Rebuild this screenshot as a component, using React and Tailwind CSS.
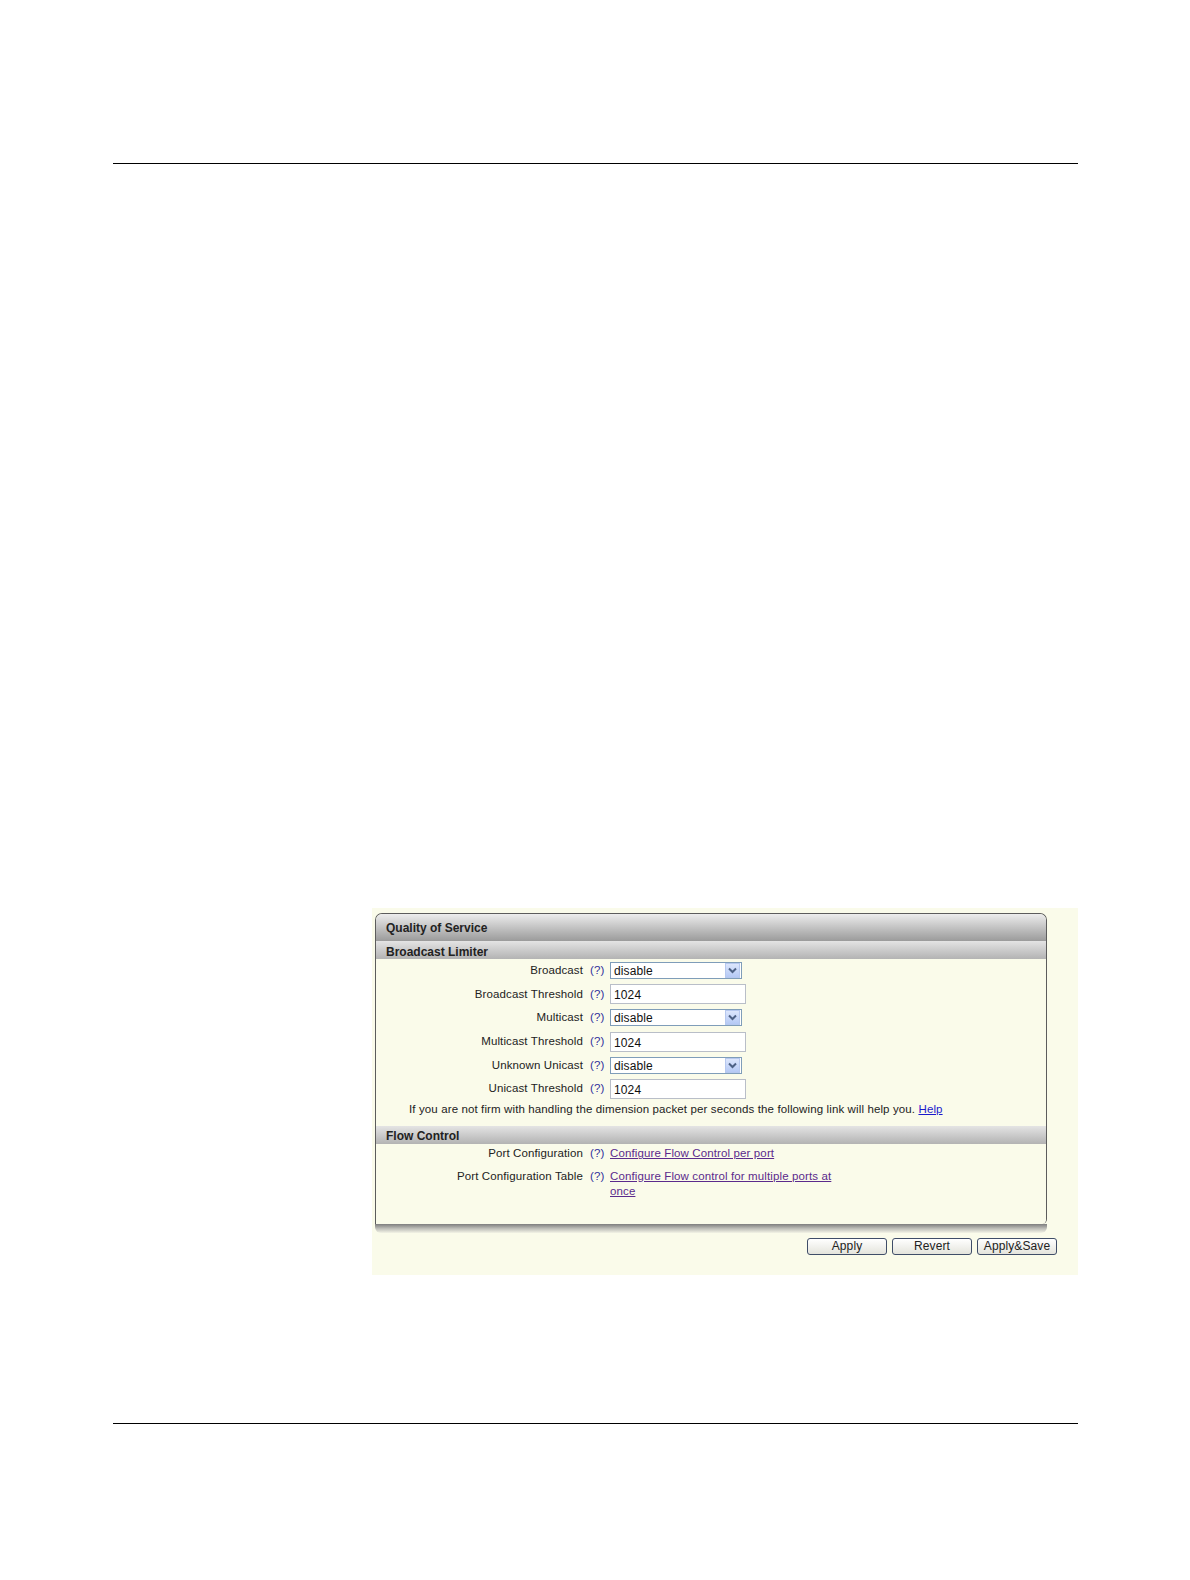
import React from 'react';

const font = { fontFamily: '"Liberation Sans", Arial, sans-serif' };

const rows = [
    { label: 'Broadcast', type: 'select', value: 'disable' },
    { label: 'Broadcast Threshold', type: 'input', value: '1024' },
    { label: 'Multicast', type: 'select', value: 'disable' },
    { label: 'Multicast Threshold', type: 'input', value: '1024' },
    { label: 'Unknown Unicast', type: 'select', value: 'disable' },
    { label: 'Unicast Threshold', type: 'input', value: '1024' },
];

const Select = ({ value }) => (
    <div className="flex items-center w-[132px] h-[17px] border border-[#7f9db9] bg-white">
        <span className="flex-1 pl-[3px] pt-px text-[12px] leading-none text-[#111]">{value}</span>
        <div className="w-[15px] h-[15px] mr-px flex items-center justify-center border border-[#b6c8ef] bg-gradient-to-b from-[#dce6fc] to-[#b5c9f5]">
            <svg width="9" height="7" viewBox="0 0 9 7">
                <path d="M1 1.5 L4.5 5 L8 1.5" fill="none" stroke="#4d6185" strokeWidth="2" />
            </svg>
        </div>
    </div>
);

const TextInput = ({ value }) => (
    <div className="flex items-center w-[136px] h-[20px] border border-[#b9bec8] bg-white">
        <span className="pl-[3px] pt-[2px] text-[12px] leading-none text-[#111]">{value}</span>
    </div>
);

const Help = () => (
    <span className="ml-[7px] w-[14px] text-[11.5px] text-[#2f2f9a] whitespace-nowrap">(?)</span>
);

const SectionHeader = ({ children }) => (
    <div className="h-[18px] pl-[10px] pt-[3px] flex items-center bg-gradient-to-b from-[#e4e4e4] to-[#b3b3b3] text-[12px] font-bold text-[#222]">
        {children}
    </div>
);

const Button = ({ children }) => (
    <button className="w-[80px] h-[17px] rounded-[3px] border border-[#3f4d68] bg-gradient-to-b from-white to-[#e4e4dc] text-[12px] leading-none tracking-[0.1px] text-[#222]">
        {children}
    </button>
);

const App = () => {
    return (
        <div className="w-[1190px] h-[1580px] bg-white pt-[163px]" style={font}>
            <div className="ml-[113px] w-[965px] h-px bg-black" />

            <div className="mt-[744px] ml-[372px] w-[706px] h-[367px] bg-[#fafbea] pt-[5px] pl-[3px]">
                <div className="w-[672px]">
                    <div className="border-x border-t border-[#5c5c5c] rounded-t-[7px] rounded-br-[5px] overflow-hidden">
                        <div className="h-[27px] pl-[10px] flex items-center bg-gradient-to-b from-[#ededed] to-[#9b9b9b] text-[12px] font-bold text-[#222]">
                            Quality of Service
                        </div>
                        <SectionHeader>Broadcast Limiter</SectionHeader>

                        <div className="bg-[#fafbea] text-[11.5px] tracking-[0.12px] text-[#222]">
                            {rows.map((r) => (
                                <div key={r.label} className="h-[23.6px] flex items-center">
                                    <div className="w-[207px] text-right whitespace-nowrap">{r.label}</div>
                                    <Help />
                                    <div className="ml-[6px]">
                                        {r.type === 'select' ? <Select value={r.value} /> : <TextInput value={r.value} />}
                                    </div>
                                </div>
                            ))}
                            <div className="h-[19px] pl-[33px] flex items-center whitespace-nowrap">
                                If you are not firm with handling the dimension packet per seconds the following link will help you.&nbsp;
                                <a className="text-[#1a1acc] underline">Help</a>
                            </div>
                        </div>

                        <div className="mt-[6px]">
                            <SectionHeader>Flow Control</SectionHeader>
                        </div>

                        <div className="bg-[#fafbea] text-[11.5px] tracking-[0.12px] text-[#222] pb-[25px]">
                            <div className="h-[21px] flex items-center">
                                <div className="w-[207px] text-right">Port Configuration</div>
                                <Help />
                                <a className="ml-[6px] text-[#5b2a8c] underline">Configure Flow Control per port</a>
                            </div>
                            <div className="mt-[4px] flex items-start leading-[15px]">
                                <div className="w-[207px] text-right">Port Configuration Table</div>
                                <Help />
                                <a className="ml-[6px] w-[236px] text-[#5b2a8c] underline">
                                    Configure Flow control for multiple ports at once
                                </a>
                            </div>
                        </div>
                    </div>
                    <div className="h-[9px] rounded-b-[6px] bg-gradient-to-b from-[#7e7e7e] via-[#bdbdb8] to-[#f3f4e6]" />
                </div>

                <div className="mt-[5px] pr-[21px] flex justify-end gap-[5px]">
                    <Button>Apply</Button>
                    <Button>Revert</Button>
                    <Button>Apply&amp;Save</Button>
                </div>
            </div>

            <div className="mt-[148px] ml-[113px] w-[965px] h-px bg-black" />
        </div>
    );
};

export default App;
